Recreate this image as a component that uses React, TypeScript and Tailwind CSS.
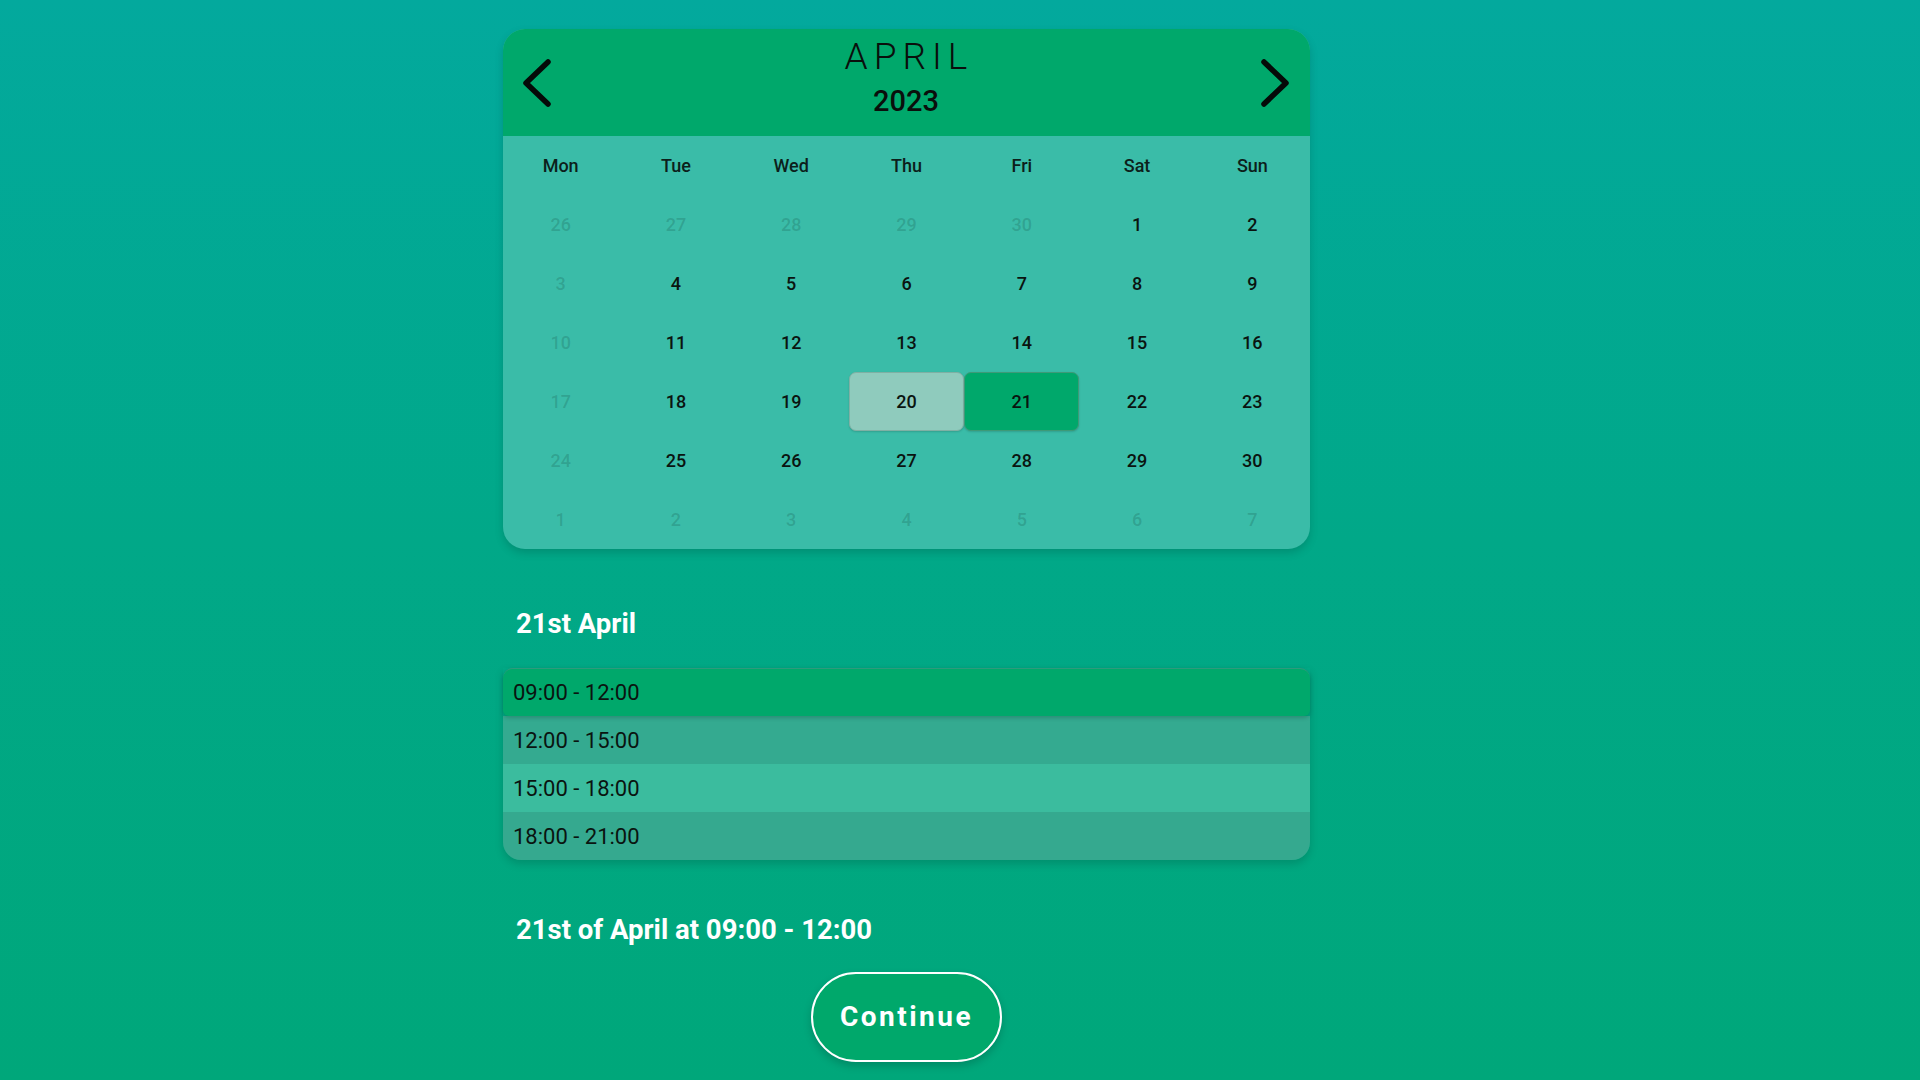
import React from "react";

const weeks: { d: number; muted?: boolean }[][] = [
  [{ d: 26, muted: true }, { d: 27, muted: true }, { d: 28, muted: true }, { d: 29, muted: true }, { d: 30, muted: true }, { d: 1 }, { d: 2 }],
  [{ d: 3, muted: true }, { d: 4 }, { d: 5 }, { d: 6 }, { d: 7 }, { d: 8 }, { d: 9 }],
  [{ d: 10, muted: true }, { d: 11 }, { d: 12 }, { d: 13 }, { d: 14 }, { d: 15 }, { d: 16 }],
  [{ d: 17, muted: true }, { d: 18 }, { d: 19 }, { d: 20 }, { d: 21 }, { d: 22 }, { d: 23 }],
  [{ d: 24, muted: true }, { d: 25 }, { d: 26 }, { d: 27 }, { d: 28 }, { d: 29 }, { d: 30 }],
  [{ d: 1, muted: true }, { d: 2, muted: true }, { d: 3, muted: true }, { d: 4, muted: true }, { d: 5, muted: true }, { d: 6, muted: true }, { d: 7, muted: true }],
];

const days = ["Mon", "Tue", "Wed", "Thu", "Fri", "Sat", "Sun"];

const slots = [
  { t: "09:00 - 12:00", cls: "bg-[#00a86b] rounded-t-[10px] rounded-b-[6px] border-t border-[#2e9b7c] shadow-[0_2px_4px_rgba(0,0,0,0.18)] z-10" },
  { t: "12:00 - 15:00", cls: "bg-[#34aa90]" },
  { t: "15:00 - 18:00", cls: "bg-[#3bbc9e]" },
  { t: "18:00 - 21:00", cls: "bg-[#35a98f] rounded-b-[18px]" },
];

function Chevron({ dir }: { dir: "left" | "right" }) {
  return (
    <svg width="32" height="50" viewBox="0 0 32 50" fill="none">
      <path
        d={dir === "left" ? "M27 4 L5 25 L27 46" : "M5 4 L27 25 L5 46"}
        stroke="#050a08"
        strokeWidth="5.5"
        strokeLinecap="round"
        strokeLinejoin="round"
      />
    </svg>
  );
}

export default function App() {
  return (
    <div
      className="min-h-screen w-full bg-gradient-to-b from-[#03a99d] via-[#01a888] to-[#00a77a] overflow-hidden"
      style={{ fontFamily: "Roboto, 'Noto Sans', sans-serif", height: 1080 }}
    >
      <div className="ml-[503px] w-[807px] pt-[29px] flex flex-col">
        {/* Calendar card */}
        <div className="rounded-[22px] overflow-hidden bg-[#3abca8] shadow-[0_4px_8px_rgba(0,0,0,0.15)]">
          <div className="h-[107px] bg-[#00a86b] flex items-center justify-between pl-[18px] pr-[19px]">
            <Chevron dir="left" />
            <div className="flex flex-col items-center -mt-[7px]">
              <div className="text-[37px] leading-[44px] font-light tracking-[6px] pl-[6px] text-[#0a0f0c] -mt-[6px]">APRIL</div>
              <div className="text-[29px] leading-[34px] font-medium text-[#0a0f0c] mt-[5px]">2023</div>
            </div>
            <Chevron dir="right" />
          </div>
          <div className="grid grid-cols-7">
            {days.map((d) => (
              <div key={d} className="h-[59px] flex items-center justify-center text-[18px] font-medium text-[#0c1f1b]">
                {d}
              </div>
            ))}
            {weeks.flat().map((c, i) => {
              const is20 = i === 24 && !c.muted;
              const is21 = i === 25 && !c.muted;
              let cls = "h-[59px] flex items-center justify-center text-[18px] font-medium ";
              if (c.muted) cls += "text-[#0b3a30]/20";
              else cls += "text-[#0a1410]";
              if (is20) cls += " bg-[#8fcbbd] rounded-[7px] border border-[#7fb0a4] shadow-[0_1px_2px_rgba(0,0,0,0.15)]";
              if (is21) cls += " bg-[#00a86b] rounded-[7px] border border-[#3e9a78] shadow-[0_1px_2px_rgba(0,0,0,0.15)]";
              return (
                <div key={i} className={cls}>
                  {c.d}
                </div>
              );
            })}
          </div>
        </div>

        <div className="mt-[59px] pl-[13px] text-[27.5px] leading-[32px] font-bold text-white">21st April</div>

        <div className="mt-[28px] flex flex-col rounded-b-[18px] shadow-[0_4px_8px_rgba(0,0,0,0.15)]">
          {slots.map((s) => (
            <div key={s.t} className={"relative h-[48px] flex items-center pl-[10px] text-[22px] text-[#0a1410] " + s.cls}>
              {s.t}
            </div>
          ))}
        </div>

        <div className="mt-[54px] pl-[13px] text-[27.5px] leading-[32px] font-bold text-white">
          21st of April at 09:00 - 12:00
        </div>

        <div className="mt-[26px] flex justify-center">
          <button className="w-[191px] h-[90px] rounded-full border-2 border-white bg-[#00a86b] text-white text-[28px] font-bold tracking-[2.5px] shadow-[0_4px_8px_rgba(0,0,0,0.18)]">
            Continue
          </button>
        </div>
      </div>
    </div>
  );
}
